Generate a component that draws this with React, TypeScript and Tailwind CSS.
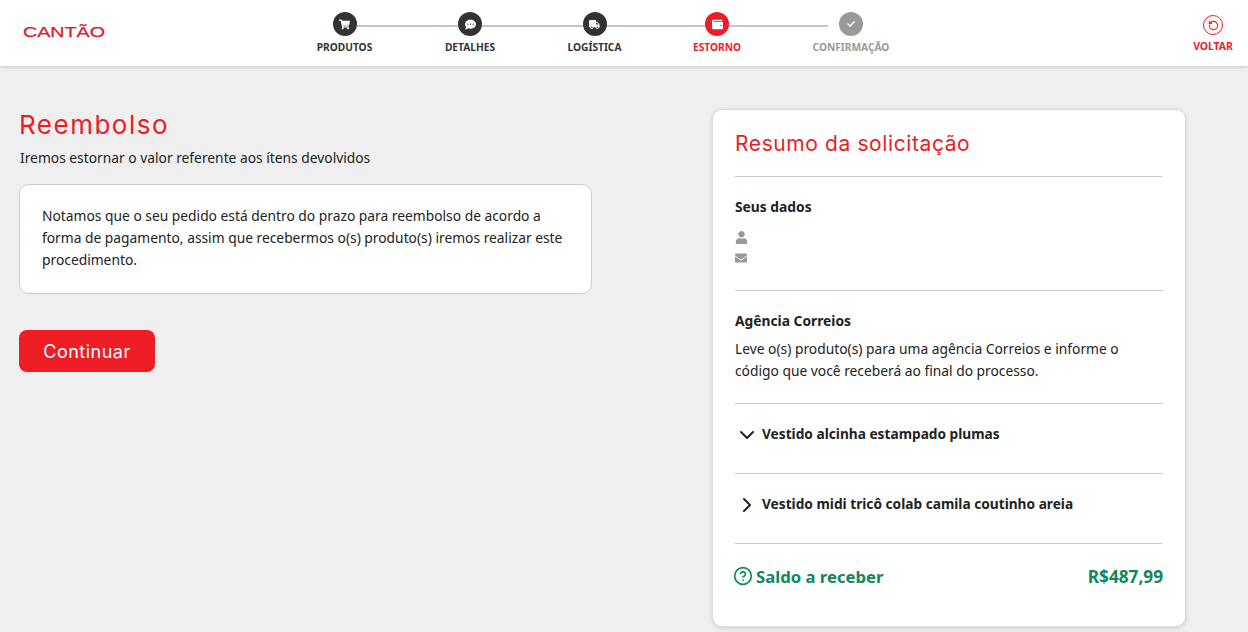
import { ChevronDown, ChevronRight, CircleHelp, RotateCcw } from 'lucide-react'
import { FaCheck, FaCommentDots, FaEnvelope, FaShoppingCart, FaTruck, FaUser, FaWallet } from 'react-icons/fa'
import type { ReactNode } from 'react'

const body = "font-['Noto_Sans',sans-serif]"
const heading = "font-['Inter','Noto_Sans',sans-serif]"

function Step({ icon, label, width, circle, text }: { icon: ReactNode; label: string; width: string; circle: string; text: string }) {
  return (
    <div className={`relative z-10 flex flex-col items-center ${width}`}>
      <div className={`flex h-6 w-6 items-center justify-center rounded-full text-[11px] text-white ${circle}`}>{icon}</div>
      <span className={`mt-[5px] text-[10.2px] leading-[12px] font-bold whitespace-nowrap ${text}`}>{label}</span>
    </div>
  )
}

function Logo() {
  return (
    <svg width="84" height="28" viewBox="0 0 84 28" className="text-[#d9202c]">
      <text x="1" y="22" textLength="82" lengthAdjust="spacingAndGlyphs" fontFamily="Liberation Sans" fontSize="14" fill="currentColor" stroke="currentColor" strokeWidth="0.25">CANTÃO</text>
    </svg>
  )
}

export default function App() {
  return (
    <div className={`flex h-[632px] flex-col overflow-hidden bg-[#efefef] text-[#222] ${body}`}>
      <header className="relative flex h-[66px] shrink-0 items-start bg-white shadow-[0_1px_3px_rgba(0,0,0,0.16)]">
        <div className="ml-[22px] mt-[15px]"><Logo /></div>
        <div className="relative ml-[211px] mt-[12px] flex gap-[72px]">
          <div className="absolute left-[27px] top-[13px] h-[2px] w-[484px] bg-[#c4c4c4]" />
          <Step icon={<FaShoppingCart />} label="PRODUTOS" width="w-[55px]" circle="bg-[#333]" text="text-[#333]" />
          <Step icon={<FaCommentDots />} label="DETALHES" width="w-[52px]" circle="bg-[#333]" text="text-[#333]" />
          <Step icon={<FaTruck />} label="LOGÍSTICA" width="w-[53px]" circle="bg-[#333]" text="text-[#333]" />
          <Step icon={<FaWallet />} label="ESTORNO" width="w-[48px]" circle="bg-[#ee1c25]" text="text-[#ee1c25]" />
          <Step icon={<FaCheck className="text-[8px]" />} label="CONFIRMAÇÃO" width="w-[76px]" circle="bg-[#999]" text="text-[#999]" />
        </div>
        <div className="ml-auto mr-[15px] mt-[15px] flex w-[40px] flex-col items-center text-[#ee1c25]">
          <div className="flex h-5 w-5 items-center justify-center rounded-full border-[1.5px] border-[#ee1c25]">
            <RotateCcw size={11} strokeWidth={2.4} />
          </div>
          <span className="mt-[5px] text-[10.4px] leading-[12px] font-bold">VOLTAR</span>
        </div>
      </header>

      <main className="flex flex-1 items-start">
        <section className="ml-[19px] mt-[41px] w-[573px]">
          <h1 className={`pt-px text-[26px] leading-[33px] tracking-[1.5px] text-[#ee1c25] ${heading}`}>Reembolso</h1>
          <p className="mt-[7px] ml-px text-[13.8px] leading-[20px]">Iremos estornar o valor referente aos ítens devolvidos</p>
          <div className="mt-4 h-[110px] rounded-[10px] border border-[#ccc] bg-white px-[22px] py-[20px] text-[13.8px] leading-[22px]">
            Notamos que o seu pedido está dentro do prazo para reembolso de acordo a forma de pagamento, assim que recebermos o(s) produto(s) iremos realizar este procedimento.
          </div>
          <button className={`mt-9 h-[42px] w-[136px] rounded-lg bg-[#ee1c25] text-[18px] tracking-[0.5px] text-white ${heading}`}>Continuar</button>
        </section>

        <aside className="ml-[120px] mt-[43px] h-[518px] w-[474px] rounded-[10px] border border-[#ddd] bg-white px-[22px] shadow-[0_1px_4px_rgba(0,0,0,0.15)]">
          <div className="flex h-[67px] items-center border-b border-[#ccc] pt-[2px]">
            <h2 className={`text-[21px] tracking-[0.6px] text-[#ee1c25] ${heading}`}>Resumo da solicitação</h2>
          </div>
          <div className="h-[114px] border-b border-[#ccc] pt-[20px]">
            <h3 className="text-[13.8px] leading-[20px] font-bold">Seus dados</h3>
            <div className="mt-[14px] flex h-[12px] items-center text-[13px] text-[#999]"><FaUser /></div>
            <div className="mt-[9px] flex h-[12px] items-center text-[12px] text-[#999]"><FaEnvelope /></div>
          </div>
          <div className="h-[113px] border-b border-[#ccc] pt-[20px]">
            <h3 className="text-[13.8px] leading-[20px] font-bold">Agência Correios</h3>
            <p className="mt-[7px] text-[13.8px] leading-[22px]">Leve o(s) produto(s) para uma agência Correios e informe o código que você receberá ao final do processo.</p>
          </div>
          <div className="flex h-[70px] items-center gap-[3px] border-b border-[#ccc] pb-[8px] text-[13.7px] font-bold">
            <ChevronDown size={24} strokeWidth={2} />
            <span>Vestido alcinha estampado plumas</span>
          </div>
          <div className="flex h-[70px] items-center gap-[3px] border-b border-[#ccc] pb-[8px] text-[13.7px] font-bold">
            <ChevronRight size={24} strokeWidth={2} />
            <span>Vestido midi tricô colab camila coutinho areia</span>
          </div>
          <div className="flex h-[67px] items-center justify-between pb-[2px] text-[16.7px] font-bold text-[#12875a]">
            <div className="-ml-[2px] flex items-center gap-[3px]">
              <CircleHelp size={20} strokeWidth={2} />
              <span>Saldo a receber</span>
            </div>
            <span className="text-[17.2px]">R$487,99</span>
          </div>
        </aside>
      </main>
    </div>
  )
}
